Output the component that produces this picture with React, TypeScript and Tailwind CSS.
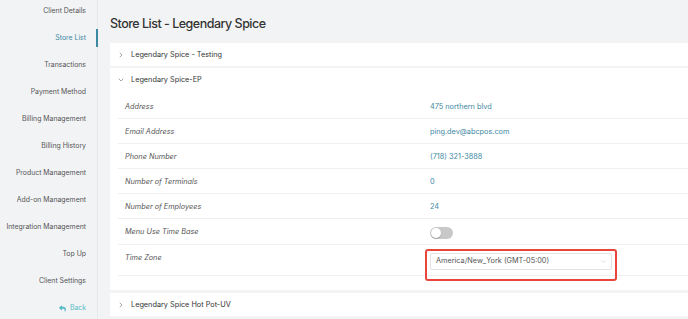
import React from 'react';
import { ChevronRight, ChevronDown } from 'lucide-react';
import { FaReply } from 'react-icons/fa';

const navItems = [
  'Client Details',
  'Store List',
  'Transactions',
  'Payment Method',
  'Billing Management',
  'Billing History',
  'Product Management',
  'Add-on Management',
  'Integration Management',
  'Top Up',
  'Client Settings',
];

const details = [
  { label: 'Address', value: '475 northern blvd' },
  { label: 'Email Address', value: 'ping.dev@abcpos.com' },
  { label: 'Phone Number', value: '(718) 321-3888' },
  { label: 'Number of Terminals', value: '0' },
  { label: 'Number of Employees', value: '24' },
];

function Sidebar() {
  return (
    <div className="w-[98px] shrink-0 border-r border-[#e6e8eb] flex flex-col gap-[9px] pt-[2px] text-[6.9px] whitespace-nowrap">
      {navItems.map((item) => (
        <div
          key={item}
          className={
            item === 'Store List'
              ? 'h-[18px] flex items-center justify-end pr-[10px] border-r-2 border-[#3d88a3] text-[#3d88a3] mr-[-1px]'
              : 'h-[18px] flex items-center justify-end pr-[11px] text-[#555]'
          }
        >
          {item}
        </div>
      ))}
      <div className="h-[18px] flex items-center justify-end gap-[4px] pr-[11px] text-[#5bbcc8]">
        <FaReply className="w-[7px] h-[7px]" />
        Back
      </div>
    </div>
  );
}

function StoreHeader({ name, open }: { name: string; open?: boolean }) {
  return (
    <div className="h-[23px] flex items-center text-[#333] pt-[1px]">
      <div className="w-[21px] flex justify-end pr-[6px] text-[#666]">
        {open ? (
          <ChevronDown className="w-[8px] h-[8px]" strokeWidth={1.75} />
        ) : (
          <ChevronRight className="w-[8px] h-[8px]" strokeWidth={1.75} />
        )}
      </div>
      {name}
    </div>
  );
}

function DetailRow({ label, children }: { label: string; children: React.ReactNode }) {
  return (
    <div className="flex border-b border-[#eeeff1] h-[25px]">
      <div className="w-[312px] shrink-0 pl-[7px] pt-[8px] italic text-[#555] leading-[10px]">{label}</div>
      <div className="flex-1 pt-[8px] leading-[10px] text-[#3d88a3]">{children}</div>
    </div>
  );
}

export default function App() {
  return (
    <div
      className="w-[688px] h-[319px] overflow-hidden flex bg-[#f2f3f5] text-[7.3px]"
      style={{ fontFamily: 'Inter, "Liberation Sans", sans-serif' }}
    >
      <Sidebar />
      <div className="flex-1 min-w-0 pl-[12px] flex flex-col">
        <div className="h-[43px] shrink-0 flex items-center pt-[6px] text-[12.5px] tracking-[-0.5px] font-medium text-[#333]">
          Store List - Legendary Spice
        </div>
        <div className="bg-white mb-[2px]">
          <StoreHeader name="Legendary Spice - Testing" />
        </div>
        <div className="bg-white mb-[3px] pb-[14px]">
          <StoreHeader name="Legendary Spice-EP" open />
          <div className="ml-[8px] mt-[3px]">
            {details.map((d) => (
              <DetailRow key={d.label} label={d.label}>
                {d.value}
              </DetailRow>
            ))}
            <div className="flex border-b border-[#eeeff1] h-[26px]">
              <div className="w-[312px] shrink-0 pl-[7px] pt-[8px] italic text-[#555] leading-[10px]">Menu Use Time Base</div>
              <div className="flex-1 pt-[8px]">
                <div className="w-[23px] h-[12px] rounded-full bg-[#c8c8c8] p-[1px] flex">
                  <div className="w-[10px] h-[10px] rounded-full bg-white shadow-[0_1px_1px_rgba(0,0,0,0.2)]" />
                </div>
              </div>
            </div>
            <div className="flex border-b border-[#eeeff1] h-[31px]">
              <div className="w-[312px] shrink-0 pl-[7px] pt-[8px] italic text-[#555] leading-[10px]">Time Zone</div>
              <div className="flex-1 pt-[8px]">
                <div className="relative w-[182px]">
                  <div className="h-[17px] border border-[#e3e3e3] rounded-[2px] flex items-center justify-between pl-[5px] pr-[4px] text-[#555]">
                    America/New_York (GMT-05:00)
                    <ChevronDown className="w-[7px] h-[7px] text-[#bbb]" strokeWidth={1.5} />
                  </div>
                  <div className="absolute left-[-5px] right-[-5px] top-[-4px] bottom-[-11px] border-2 border-[#e8463b] rounded-[3px]" />
                </div>
              </div>
            </div>
          </div>
        </div>
        <div className="bg-white">
          <StoreHeader name="Legendary Spice Hot Pot-UV" />
        </div>
      </div>
    </div>
  );
}
